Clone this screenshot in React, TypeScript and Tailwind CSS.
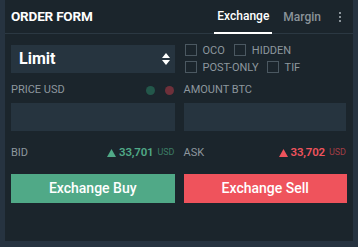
import React from 'react'

function Check(props: { label: string }) {
  return (
    <div className="flex items-center gap-[6px]">
      <div className="w-[12px] h-[12px] border border-[#4b5861]" />
      <span className="text-[11px] leading-none text-[#8d979e]">{props.label}</span>
    </div>
  )
}

function Tri(props: { color: string }) {
  return (
    <svg width="9" height="8" viewBox="0 0 9 8" className="mb-[1px]">
      <path d="M4.5 0 L9 8 L0 8 Z" fill={props.color} />
    </svg>
  )
}

export default function App() {
  return (
    <div className="w-[358px] h-[247px] bg-[#263340] pl-[5px] pr-[5px] pb-[6px] font-['Roboto',sans-serif]">
      <div className="h-full bg-[#1b252c] flex flex-col">
        {/* header */}
        <div className="h-[34px] flex items-center pl-[6px] pr-[12px] border-b border-[#2b3842]">
          <div className="text-[13.5px] font-bold text-white tracking-[-0.2px]">ORDER FORM</div>
          <div className="ml-auto flex items-stretch h-full">
            <div className="px-[3px] flex items-center border-b-2 border-white -mb-[1px] text-[12px] font-medium text-white">Exchange</div>
            <div className="ml-[11px] flex items-center text-[12px] font-medium text-[#8a9399]">Margin</div>
            <div className="ml-[18px] flex flex-col justify-center gap-[2px]">
              <div className="w-[2px] h-[2px] bg-[#8a9399]" />
              <div className="w-[2px] h-[2px] bg-[#8a9399]" />
              <div className="w-[2px] h-[2px] bg-[#8a9399]" />
            </div>
          </div>
        </div>

        <div className="px-[6px] pt-[11px] grid grid-cols-2 gap-x-[9px]">
          {/* select */}
          <div className="h-[28px] bg-[#26343f] flex items-center pl-[8px] pr-[5px]">
            <span className="text-[16px] font-bold text-white">Limit</span>
            <svg width="8" height="12" viewBox="0 0 8 12" className="ml-auto">
              <path d="M4 0 L8 5 L0 5 Z M4 12 L8 7 L0 7 Z" fill="#ffffff" />
            </svg>
          </div>
          <div className="flex flex-col gap-[5px] pl-[1px] -mt-[1px]">
            <div className="flex gap-[9px]">
              <Check label="OCO" />
              <Check label="HIDDEN" />
            </div>
            <div className="flex gap-[8px]">
              <Check label="POST-ONLY" />
              <Check label="TIF" />
            </div>
          </div>

          {/* labels */}
          <div className="mt-[12px] h-[10px] flex items-center text-[11px] text-[#8d979e]">
            <span>PRICE USD</span>
            <div className="ml-auto flex gap-[10px] pr-[1px]">
              <div className="w-[9px] h-[9px] rounded-full bg-[#23574a]" />
              <div className="w-[9px] h-[9px] rounded-full bg-[#6e303a]" />
            </div>
          </div>
          <div className="mt-[12px] h-[10px] flex items-center text-[11px] text-[#8d979e]">AMOUNT BTC</div>

          {/* inputs */}
          <div className="mt-[8px] h-[28px] bg-[#26343f]" />
          <div className="mt-[8px] h-[28px] bg-[#26343f] mr-[1px]" />

          {/* bid / ask */}
          <div className="mt-[16px] h-[12px] flex items-center text-[11px] text-[#8d979e]">
            <span>BID</span>
            <div className="ml-auto flex items-center gap-[3px]">
              <Tri color="#50a987" />
              <span className="text-[11.5px] font-semibold tracking-[-0.2px] text-[#50a987]">33,701</span>
              <span className="text-[9px] text-[#3c7b64] ml-[1px]">USD</span>
            </div>
          </div>
          <div className="mt-[16px] h-[12px] flex items-center text-[11px] text-[#8d979e]">
            <span>ASK</span>
            <div className="ml-auto flex items-center gap-[3px] pr-[1px]">
              <Tri color="#ef535c" />
              <span className="text-[11.5px] font-semibold tracking-[-0.2px] text-[#ef535c]">33,702</span>
              <span className="text-[9px] text-[#a13d45] ml-[1px]">USD</span>
            </div>
          </div>

          {/* buttons */}
          <div className="mt-[15px] h-[29px] bg-[#50a987] flex items-center justify-center text-[14px] font-medium text-white">Exchange Buy</div>
          <div className="mt-[15px] h-[29px] bg-[#ef535c] flex items-center justify-center text-[14px] font-medium text-white">Exchange Sell</div>
        </div>
      </div>
    </div>
  )
}
